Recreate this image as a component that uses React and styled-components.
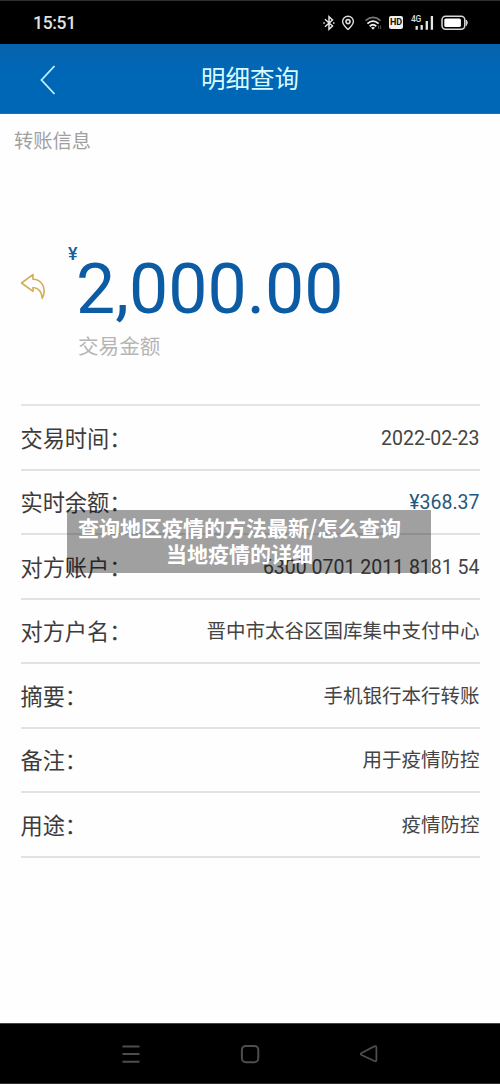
import React from "react";
import styled, { createGlobalStyle } from "styled-components";

const linhas = [
    { nome: "交易时间：", valor: "2022-02-23" },
    { nome: "实时余额：", valor: "¥368.37", cor: "#1f587e" },
    { nome: "对方账户：", valor: "6300 0701 2011 8181 54" },
    { nome: "对方户名：", valor: "晋中市太谷区国库集中支付中心" },
    { nome: "摘要：", valor: "手机银行本行转账" },
    { nome: "备注：", valor: "用于疫情防控" },
    { nome: "用途：", valor: "疫情防控" },
];

export default function App() {
    return (
        <>
            <GlobalStyle />
            <Tela>
                <BarraStatus>
                    <Hora>15:51</Hora>
                    <IconesStatus />
                </BarraStatus>
                <Topo>
                    <Voltar width="18" height="32" viewBox="0 0 18 32">
                        <path d="M15.5 2 L2.5 16 L15.5 30" fill="none" stroke="#c4f0ff" strokeWidth="1.8" />
                    </Voltar>
                    <Titulo>明细查询</Titulo>
                </Topo>
                <Conteudo>
                    <Secao>转账信息</Secao>
                    <Resumo>
                        <Seta width="28" height="28" viewBox="0 0 28 28">
                            <path
                                d="M1.5 10 L13 1.6 V6.3 C21 6.3 27.3 14 22.3 25.3 C21.6 18.5 19 14.8 13 14.5 V18.3 Z"
                                fill="none"
                                stroke="#d2ad55"
                                strokeWidth="1.6"
                                strokeLinejoin="round"
                            />
                        </Seta>
                        <Moeda>¥</Moeda>
                        <div>
                            <Valor>2,000.00</Valor>
                            <Legenda>交易金额</Legenda>
                        </div>
                    </Resumo>
                    <Lista>
                        {linhas.map((l) => (
                            <Linha key={l.nome}>
                                <Nome>{l.nome}</Nome>
                                <Dado $cor={l.cor}>{l.valor}</Dado>
                            </Linha>
                        ))}
                    </Lista>
                </Conteudo>
                <Navegacao>
                    <svg width="20" height="20" viewBox="0 0 20 20">
                        <path d="M1.5 2.5 H18.5 M1.5 10 H18.5 M1.5 17.7 H18.5" stroke="#4d4d4d" strokeWidth="2" />
                    </svg>
                    <svg width="20" height="20" viewBox="0 0 20 20">
                        <rect x="1.9" y="1.9" width="16.4" height="16.4" rx="4" fill="none" stroke="#4d4d4d" strokeWidth="2" />
                    </svg>
                    <svg width="20" height="20" viewBox="0 0 20 20">
                        <path
                            d="M2.6 9 L15.2 2.4 Q17.4 1.5 17.4 3.6 V15.8 Q17.4 18 15.4 17 L2.6 11 Q1 10 2.6 9 Z"
                            fill="none"
                            stroke="#4d4d4d"
                            strokeWidth="1.8"
                        />
                    </svg>
                </Navegacao>
                <Faixa>
                    <span>查询地区疫情的方法最新/怎么查询</span>
                    <span>当地疫情的详细</span>
                </Faixa>
            </Tela>
        </>
    );
}

function IconesStatus() {
    return (
        <Icones>
            <svg width="12" height="16" viewBox="0 0 12 16">
                <path
                    d="M2 4.3 L9.5 11 L6 14.2 V1.8 L9.5 5 L2 11.7"
                    fill="none"
                    stroke="#e4e4e4"
                    strokeWidth="1.5"
                />
                <path d="M0.3 8 H1.8 M10 8 H11.5" stroke="#e4e4e4" strokeWidth="1.5" />
            </svg>
            <svg width="14" height="16" viewBox="0 0 14 16">
                <path
                    d="M7 14.4 C4 11.6 1.6 9.2 1.6 6.4 A5.4 5.2 0 0 1 12.4 6.4 C12.4 9.2 10 11.6 7 14.4 Z"
                    fill="none"
                    stroke="#dedede"
                    strokeWidth="1.4"
                />
                <circle cx="7" cy="6.6" r="2" fill="none" stroke="#dedede" strokeWidth="1.6" />
            </svg>
            <svg width="18" height="16" viewBox="0 0 18 16">
                <path d="M1.5 5.6 Q9 -0.8 16.5 5.6" fill="none" stroke="#777" strokeWidth="1.5" />
                <path d="M3.4 8.6 Q9 3.7 14.6 8.6" fill="none" stroke="#eee" strokeWidth="1.8" />
                <path d="M5.7 11.2 Q9 8.4 12.3 11.2" fill="none" stroke="#eee" strokeWidth="1.8" />
                <path d="M7 12.6 Q9 11.2 11 12.6 L9 14.8 Z" fill="#eee" />
                <path d="M14.6 10.5 V14 M16.6 10.5 V14" stroke="#555" strokeWidth="1" />
            </svg>
            <Hd>HD</Hd>
            <Sinal>
                <Rede>4G</Rede>
                <svg width="21" height="16" viewBox="0 0 21 16">
                    <path d="M3.7 11 V14.7 M8.7 10 V14.7 M13.8 6 V14.7 M18.9 1 V14.7" stroke="#e6e6e6" strokeWidth="2.3" />
                </svg>
            </Sinal>
            <svg width="28" height="16" viewBox="0 0 28 16">
                <rect x="1" y="1.2" width="22.8" height="13" rx="3.6" fill="none" stroke="#d8d8d8" strokeWidth="1.5" />
                <rect x="3.3" y="3.4" width="16.6" height="8.7" rx="1.5" fill="#fff" />
                <path d="M25.3 5 Q27.3 7.7 25.3 10.5 Z" fill="#d8d8d8" stroke="#d8d8d8" />
            </svg>
        </Icones>
    );
}

const GlobalStyle = createGlobalStyle`
    * {
        box-sizing: border-box;
    }
    body {
        margin: 0;
        background: #fff;
        font-family: Roboto, "Noto Sans CJK SC", sans-serif;
    }
`;

const Tela = styled.div`
    position: relative;
    width: 500px;
    height: 1084px;
    display: flex;
    flex-direction: column;
    background: #fefefe;
    overflow: hidden;
`;

const BarraStatus = styled.div`
    height: 44px;
    flex-shrink: 0;
    background: #000;
    border-top: 1px solid #303030;
    display: flex;
    align-items: center;
    justify-content: space-between;
    padding: 0 31px 0 33px;
`;

const Hora = styled.span`
    font-size: 17.5px;
    font-weight: 500;
    line-height: 20px;
    letter-spacing: -0.3px;
    color: #e2e2e2;
`;

const Icones = styled.div`
    display: flex;
    align-items: center;

    svg {
        display: block;
    }
    > svg:nth-child(2) {
        margin-left: 6px;
    }
    > svg:nth-child(3) {
        margin-left: 9px;
    }
`;

const Hd = styled.span`
    width: 14px;
    height: 13px;
    margin-left: 7px;
    border-radius: 2px;
    background: #f0f0f0;
    color: #111;
    font-size: 9px;
    font-weight: 700;
    line-height: 13.5px;
    text-align: center;
`;

const Sinal = styled.div`
    position: relative;
    margin: 0 7px 0 10px;
`;

const Rede = styled.span`
    position: absolute;
    left: -2px;
    top: 0;
    font-size: 8.5px;
    font-weight: 500;
    line-height: 9px;
    letter-spacing: -0.4px;
    color: #ddd;
`;

const Topo = styled.header`
    height: 70px;
    flex-shrink: 0;
    display: grid;
    grid-template-columns: 1fr auto 1fr;
    align-items: center;
    padding-top: 2px;
    background: linear-gradient(#0862ad, #0067b6 40%, #0067b6);
    border-bottom: 1px solid #1675b8;
`;

const Voltar = styled.svg`
    margin-left: 39px;
`;

const Titulo = styled.h1`
    margin: 0;
    font-size: 24.5px;
    font-weight: 400;
    line-height: 34px;
    color: #d8fbff;
`;

const Conteudo = styled.main`
    flex: 1;
`;

const Secao = styled.p`
    margin: 14px 0 0 14px;
    height: 28px;
    font-size: 19.3px;
    line-height: 28px;
    color: #a0a0a0;
`;

const Resumo = styled.section`
    height: 248px;
    display: flex;
    align-items: flex-start;
    padding: 88px 0 0 20px;
`;

const Seta = styled.svg`
    flex-shrink: 0;
    margin-top: 29px;
`;

const Moeda = styled.span`
    width: 28px;
    padding-left: 20px;
    font-size: 18px;
    font-weight: 500;
    line-height: 20px;
    color: #1a5f97;
`;

const Valor = styled.div`
    margin-top: 10px;
    height: 70px;
    font-size: 69.8px;
    line-height: 70px;
    color: #0b5ca4;
    white-space: nowrap;
`;

const Legenda = styled.div`
    margin-top: 9px;
    padding-left: 2px;
    font-size: 20.6px;
    line-height: 28px;
    color: #b5b5b5;
`;

const Lista = styled.div`
    margin: 0 20.5px;
    border-top: 2px solid #e4e4e4;
`;

const Linha = styled.div`
    height: 64.5px;
    display: flex;
    align-items: center;
    justify-content: space-between;
    padding-top: 3px;
    border-bottom: 2px solid #e2e2e2;
    white-space: nowrap;
`;

const Nome = styled.span`
    font-size: 22.2px;
    line-height: 32px;
    color: #3c3c3c;
`;

const Dado = styled.span`
    font-size: 19.5px;
    line-height: 30px;
    color: ${(props) => props.$cor || "#444"};
`;

const Navegacao = styled.nav`
    height: 61px;
    flex-shrink: 0;
    display: flex;
    justify-content: space-between;
    align-items: center;
    padding: 0 121px;
    background: #000;
    border-top: 1px solid #444;
    border-bottom: 1px solid #303030;
`;

/* faixa escura por cima da lista */
const Faixa = styled.div`
    position: absolute;
    left: 67px;
    top: 510px;
    width: 364px;
    height: 63px;
    padding: 4px 19px 0 0;
    display: flex;
    flex-direction: column;
    align-items: center;
    background: rgba(0, 0, 0, 0.37);
    color: #fff;
    font-family: "Noto Sans CJK SC", sans-serif;
    font-size: 21px;
    font-weight: 700;
    line-height: 26px;
    white-space: nowrap;
`;
